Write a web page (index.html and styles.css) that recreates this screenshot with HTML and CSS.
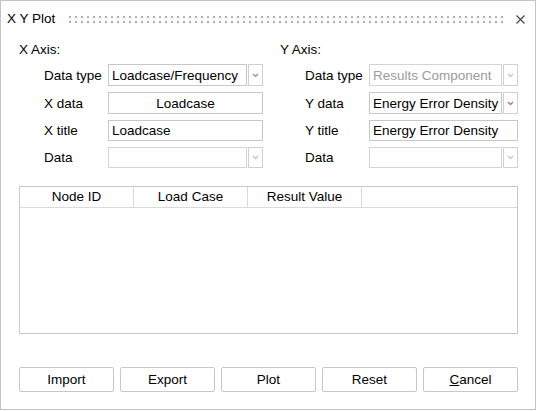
FILE: index.html
```html
<!DOCTYPE html>
<html lang="en">
<head>
    <meta charset="UTF-8">
    <title>X Y Plot</title>
    <link rel="stylesheet" href="styles.css">
</head>
<body>
    <div class="dialog">
        <div class="titlebar">
            <span class="title">X Y Plot</span>
            <span class="grip"></span>
            <span class="close">
                <svg width="9" height="9" viewBox="0 0 9 9"><path d="M0.5 0.5 L8.5 8.5 M8.5 0.5 L0.5 8.5" stroke="#444" stroke-width="1.1" fill="none"/></svg>
            </span>
        </div>

        <div class="axes">
            <div class="axis axis-x">
                <div class="axis-head">X Axis:</div>
                <div class="row">
                    <label>Data type</label>
                    <div class="combo">
                        <span class="field">Loadcase/Frequency</span>
                        <span class="drop"><svg width="7" height="5" viewBox="0 0 7 5"><path d="M1 1 L3.5 3.5 L6 1" stroke="#9a9a9a" stroke-width="1.4" fill="none"/></svg></span>
                    </div>
                </div>
                <div class="row">
                    <label>X data</label>
                    <div class="combo"><span class="field center">Loadcase</span></div>
                </div>
                <div class="row short">
                    <label>X title</label>
                    <div class="combo"><span class="field">Loadcase</span></div>
                </div>
                <div class="row short">
                    <label>Data</label>
                    <div class="combo">
                        <span class="field disabled"></span>
                        <span class="drop"><svg width="7" height="5" viewBox="0 0 7 5"><path d="M1 1 L3.5 3.5 L6 1" stroke="#c8c8c8" stroke-width="1.4" fill="none"/></svg></span>
                    </div>
                </div>
            </div>

            <div class="axis axis-y">
                <div class="axis-head">Y Axis:</div>
                <div class="row">
                    <label>Data type</label>
                    <div class="combo">
                        <span class="field disabled">Results Component</span>
                        <span class="drop"><svg width="7" height="5" viewBox="0 0 7 5"><path d="M1 1 L3.5 3.5 L6 1" stroke="#c8c8c8" stroke-width="1.4" fill="none"/></svg></span>
                    </div>
                </div>
                <div class="row">
                    <label>Y data</label>
                    <div class="combo">
                        <span class="field">Energy Error Density</span>
                        <span class="drop"><svg width="7" height="5" viewBox="0 0 7 5"><path d="M1 1 L3.5 3.5 L6 1" stroke="#8a8a8a" stroke-width="1.4" fill="none"/></svg></span>
                    </div>
                </div>
                <div class="row short">
                    <label>Y title</label>
                    <div class="combo"><span class="field">Energy Error Density</span></div>
                </div>
                <div class="row short">
                    <label>Data</label>
                    <div class="combo">
                        <span class="field disabled"></span>
                        <span class="drop"><svg width="7" height="5" viewBox="0 0 7 5"><path d="M1 1 L3.5 3.5 L6 1" stroke="#c8c8c8" stroke-width="1.4" fill="none"/></svg></span>
                    </div>
                </div>
            </div>
        </div>

        <div class="table">
            <div class="table-head">
                <span class="col">Node ID</span>
                <span class="col">Load Case</span>
                <span class="col">Result Value</span>
            </div>
        </div>

        <div class="buttons">
            <button class="btn">Import</button>
            <button class="btn">Export</button>
            <button class="btn">Plot</button>
            <button class="btn">Reset</button>
            <button class="btn"><u>C</u>ancel</button>
        </div>
    </div>
</body>
</html>
```

FILE: styles.css
```css
body {
    margin: 0;
    background: #ffffff;
    font-family: 'Liberation Sans', Arial, sans-serif;
    font-size: 13.5px;
    color: #000000;
}
.dialog {
    width: 536px;
    height: 410px;
    box-sizing: border-box;
    border: 1px solid #c4c4c4;
    background: #ffffff;
}
.titlebar {
    display: flex;
    align-items: center;
    height: 36px;
    padding: 0 10px 0 6px;
}
.title {
    line-height: 16px;
}
.grip {
    flex: 1;
    height: 7px;
    margin: 0 9px 0 14px;
    background:
        linear-gradient(90deg, #b0b0b0 2px, transparent 2px) 0 0 / 6px 2px repeat-x,
        linear-gradient(90deg, #b0b0b0 2px, transparent 2px) 0 5px / 6px 2px repeat-x;
}
.close {
    display: flex;
    width: 9px;
    height: 9px;
}
.axes {
    display: flex;
    padding: 5px 0 0 18px;
}
.axis-x {
    width: 261px;
}
.axis-head {
    line-height: 16px;
    margin-bottom: 6px;
}
.row {
    display: flex;
    align-items: center;
    height: 22px;
    margin-bottom: 6px;
    padding-left: 25px;
}
.row.short {
    height: 21px;
}
.row label {
    width: 64px;
}
.combo {
    display: flex;
    width: 155px;
    height: 100%;
    gap: 1px;
}
.axis-y .combo {
    width: 149px;
}
.field {
    flex: 1;
    min-width: 0;
    box-sizing: border-box;
    border: 1px solid #c8c8c8;
    padding: 0 3px;
    display: flex;
    align-items: center;
    white-space: nowrap;
    overflow: hidden;
}
.field.center {
    justify-content: center;
}
.field.disabled {
    color: #9c9c9c;
    border-color: #d4d4d4;
}
.drop {
    display: flex;
    align-items: center;
    justify-content: center;
    width: 15px;
    box-sizing: border-box;
    border: 1px solid #d0d0d0;
}
.table {
    margin: 12px 0 0 18px;
    width: 499px;
    height: 148px;
    box-sizing: border-box;
    border: 1px solid #c8c8c8;
}
.table-head {
    display: flex;
    height: 21px;
    box-sizing: border-box;
    border-bottom: 1px solid #dadada;
}
.col {
    width: 114px;
    box-sizing: border-box;
    border-right: 1px solid #dadada;
    text-align: center;
    line-height: 20px;
}
.buttons {
    display: flex;
    gap: 6px;
    margin: 33px 0 0 18px;
}
.btn {
    width: 95px;
    height: 25px;
    padding: 0;
    background: #ffffff;
    border: 1px solid #c8c8c8;
    border-radius: 2px;
    font-family: 'Liberation Sans', Arial, sans-serif;
    font-size: 13.5px;
    color: #000000;
}
```
